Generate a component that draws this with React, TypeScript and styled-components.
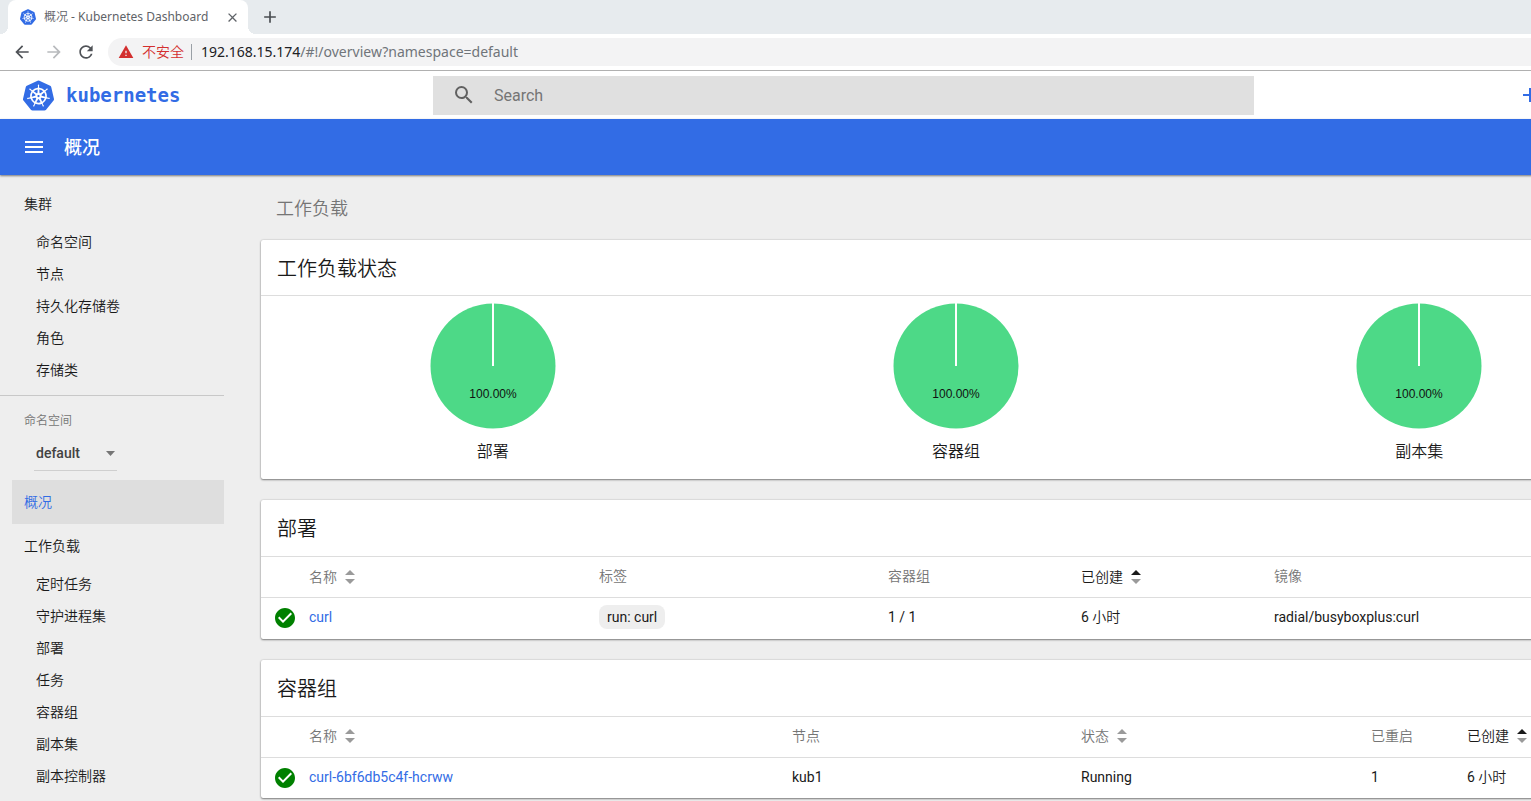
import React from "react";
import styled, { createGlobalStyle } from "styled-components";
import { MdAdd, MdArrowBack, MdArrowForward, MdCheckCircle, MdClose, MdMenu, MdRefresh, MdSearch, MdWarning } from "react-icons/md";
import { SiKubernetes } from "react-icons/si";

const blue = "#326ce5";
const ink = "#1a1a1a";
const muted = "#757575";

const GlobalStyle = createGlobalStyle`
  *, *::before, *::after { box-sizing: border-box; }
  body {
    margin: 0;
    background: #eeeeee;
    color: ${ink};
    font: 14px/20px Roboto, "Noto Sans CJK SC DemiLight", "Noto Sans CJK SC", sans-serif;
  }
  button, input, select { font: inherit; color: inherit; }
  button { padding: 0; border: 0; background: none; display: inline-flex; align-items: center; cursor: pointer; }
  a { color: inherit; text-decoration: none; }
  h1, h2, ul { margin: 0; padding: 0; font-weight: 400; }
  ul { list-style: none; }
`;

/* The dashboard is wider than the window and is cut at the right edge. */
const Viewport = styled.div`
  min-height: 100vh;
  overflow: hidden;
`;

const Dashboard = styled.div`
  width: calc(100% + 156px);
`;

const TabStrip = styled.div`
  display: flex;
  height: 34px;
  padding-left: 8px;
  background: #e7ebee;
`;

const Tab = styled.div`
  position: relative;
  display: flex;
  align-items: center;
  gap: 8px;
  width: 240px;
  padding: 0 8px 0 12px;
  border-radius: 8px 8px 0 0;
  background: #fff;
  font: 12px/16px "Noto Sans", "Noto Sans CJK SC DemiLight", "Noto Sans CJK SC", sans-serif;
  color: #5f6368;

  &::before, &::after {
    content: "";
    position: absolute;
    bottom: 0;
    width: 8px;
    height: 8px;
  }
  &::before { left: -8px; background: radial-gradient(circle at 0 0, transparent 8px, #fff 8px); }
  &::after { right: -8px; background: radial-gradient(circle at 100% 0, transparent 8px, #fff 8px); }
`;

const TabTitle = styled.span`
  flex: 1;
  white-space: nowrap;
`;

const NewTabButton = styled.button`
  margin-left: 12px;
  color: #4a4d51;
`;

const Toolbar = styled.div`
  display: flex;
  align-items: center;
  gap: 12px;
  height: 37px;
  padding-left: 12px;
  background: #fff;
  border-bottom: 1px solid #b0b0b0;
`;

const ToolButton = styled.button<{ $dim?: boolean }>`
  color: ${(p) => (p.$dim ? "#b8babd" : "#4f5257")};
`;

const AddressBar = styled.div`
  display: flex;
  align-items: center;
  flex: 1;
  height: 28px;
  padding-left: 10px;
  border-radius: 14px 0 0 14px;
  background: #f3f3f4;
  font: 14px/20px "Noto Sans", "Noto Sans CJK SC DemiLight", "Noto Sans CJK SC", sans-serif;
`;

const Insecure = styled.button`
  gap: 8px;
  color: #d32f2f;
`;

const AddressDivider = styled.span`
  width: 1px;
  height: 16px;
  margin-left: 7px;
  background: #9aa0a6;
`;

const Address = styled.div`
  padding-left: 9px;
  white-space: nowrap;
  outline: none;
  color: #202124;
`;

const AddressPath = styled.span`
  color: #70757a;
`;

const Header = styled.header`
  display: flex;
  align-items: center;
  height: 48px;
  background: #fff;
`;

const Brand = styled.a`
  display: flex;
  align-items: center;
  gap: 12px;
  flex: 0 0 433px;
  padding-left: 23px;
  color: ${blue};
  font: bold 19px/24px "DejaVu Sans Mono", monospace;
`;

const SearchBox = styled.label`
  display: flex;
  align-items: center;
  gap: 18px;
  flex: 1;
  height: 39px;
  padding-left: 19px;
  background: #e0e0e0;
  color: #616161;
`;

const SearchInput = styled.input`
  flex: 1;
  border: 0;
  padding: 2px 0 0;
  outline: none;
  background: none;
  font-size: 16px;
  &::placeholder { color: #757575; opacity: 1; }
`;

const HeaderActions = styled.div`
  display: flex;
  justify-content: flex-end;
  flex: 0 0 433px;
  padding-right: 145px;
  color: ${blue};
`;

const ActionBar = styled.div`
  position: relative;
  display: flex;
  align-items: center;
  gap: 18px;
  height: 56px;
  padding-left: 22px;
  background: ${blue};
  color: #fff;
  box-shadow: 0 1px 2px rgba(0, 0, 0, 0.5);
`;

const PageTitle = styled.h1`
  padding-top: 2px;
  font: 500 18px/24px Roboto, "Noto Sans CJK SC", sans-serif;
`;

const Body = styled.div`
  display: flex;
`;

const Sidebar = styled.nav`
  flex: 0 0 224px;
  padding-top: 7px;
`;

const Category = styled.a<{ $active?: boolean }>`
  display: flex;
  align-items: center;
  height: 44px;
  margin-left: 12px;
  padding-left: 12px;
  ${(p) => p.$active && `background: #dedede; color: ${blue};`}
`;

const SubItem = styled.a`
  display: flex;
  align-items: center;
  height: 32px;
  padding-left: 36px;
`;

const NamespaceBlock = styled.div`
  margin-top: 9px;
  padding: 15px 0 9px 24px;
  border-top: 1px solid #c8c8c8;
`;

const NamespaceLabel = styled.label`
  display: block;
  font-size: 12px;
  color: ${muted};
`;

const SelectWrap = styled.div`
  display: flex;
  align-items: center;
  width: 83px;
  height: 35px;
  margin: 5px 0 0 10px;
  border-bottom: 1px solid #cfcfcf;
`;

const Select = styled.select`
  appearance: none;
  flex: 1;
  padding: 0 0 0 2px;
  border: 0;
  outline: none;
  background: none;
  font-weight: 500;
  color: #424242;
`;

const SelectArrow = styled.svg`
  flex: none;
  margin-right: 2px;
  fill: #757575;
`;

const Content = styled.main`
  flex: 1;
  padding: 22px 36px 2px 37px;
`;

const GroupTitle = styled.h1`
  padding: 0 15px;
  font-size: 18px;
  line-height: 24px;
  color: ${muted};
`;

const Card = styled.section`
  margin-bottom: 21px;
  background: #fff;
  border-radius: 2px;
  box-shadow: 0 1px 2px rgba(0, 0, 0, 0.45), 0 0 2px rgba(0, 0, 0, 0.2);

  h1 + & { margin-top: 19px; }
  &:last-child { margin-bottom: 0; }
`;

const CardTitle = styled.h2`
  padding: 17px 16px 15px;
  font-size: 20px;
  line-height: 24px;
`;

const ChartsTitle = styled(CardTitle)`
  padding-bottom: 14px;
`;

const Charts = styled.div`
  display: grid;
  grid-template-columns: repeat(3, 1fr);
  padding: 7px 0 15px;
  border-top: 1px solid #dddddd;
`;

const ChartCell = styled.figure`
  display: flex;
  flex-direction: column;
  align-items: center;
  gap: 11px;
  margin: 0;
  font-size: 16px;
  line-height: 24px;
`;

const Table = styled.table`
  width: 100%;
  table-layout: fixed;
  border-collapse: collapse;
`;

const Col = styled.col<{ $w?: number }>`
  ${(p) => p.$w && `width: ${p.$w}px;`}
`;

const Th = styled.th<{ $sorted?: boolean }>`
  height: 41px;
  padding: 0 0 2px;
  border-top: 1px solid #dddddd;
  text-align: left;
  font-weight: 400;
  color: ${(p) => (p.$sorted ? ink : muted)};
`;

const SortButton = styled.button`
  gap: 8px;
  vertical-align: middle;
`;

const Td = styled.td`
  height: 41px;
  padding: 0 0 2px;
  border-top: 1px solid #dddddd;
  white-space: nowrap;
`;

const StatusTd = styled(Td)`
  padding: 0 0 0 12px;
  color: #008000;
  svg { display: block; }
`;

const TableLink = styled.a`
  color: ${blue};
`;

const Chip = styled.span`
  display: inline-block;
  padding: 2px 8px;
  border-radius: 8px;
  background: #eeeeee;
`;

function SortArrows({ active }: { active?: boolean }) {
  return (
    <svg width="10" height="14" viewBox="0 0 10 14" aria-hidden="true">
      <path d="M0 5 5 0 10 5Z" fill={active ? ink : "#9a9a9a"} />
      <path d="M0 9 5 14 10 9Z" fill="#9a9a9a" />
    </svg>
  );
}

const PieValue = styled.text`
  font: 12px "Liberation Sans", sans-serif;
  text-anchor: middle;
  fill: #111;
`;

function Pie({ label }: { label: string }) {
  return (
    <ChartCell>
      <svg width="126" height="126" viewBox="0 0 126 126" role="img" aria-label={`${label} 100.00%`}>
        <circle cx="63" cy="63" r="62.5" fill="#4dd987" />
        <path d="M63 0V63" stroke="#fff" strokeWidth="2" />
        <PieValue x="63" y="95">100.00%</PieValue>
      </svg>
      <figcaption>{label}</figcaption>
    </ChartCell>
  );
}

type Column = { label: string; width?: number; sort?: boolean; sorted?: boolean };

function ResourceCard({ title, columns, cells }: { title: string; columns: Column[]; cells: React.ReactNode[] }) {
  return (
    <Card>
      <CardTitle>{title}</CardTitle>
      <Table>
        <colgroup>
          <Col $w={48} />
          {columns.map((c) => <Col key={c.label} $w={c.width} />)}
        </colgroup>
        <thead>
          <tr>
            <Th aria-label="状态图标" />
            {columns.map((c) => (
              <Th key={c.label} $sorted={c.sorted}>
                {c.sort ? <SortButton type="button">{c.label}<SortArrows active={c.sorted} /></SortButton> : c.label}
              </Th>
            ))}
          </tr>
        </thead>
        <tbody>
          <tr>
            <StatusTd><MdCheckCircle size={24} /></StatusTd>
            {cells.map((cell, i) => <Td key={columns[i].label}>{cell}</Td>)}
          </tr>
        </tbody>
      </Table>
    </Card>
  );
}

const clusterItems = ["命名空间", "节点", "持久化存储卷", "角色", "存储类"];
const workloadItems = ["定时任务", "守护进程集", "部署", "任务", "容器组", "副本集", "副本控制器"];

const deploymentColumns: Column[] = [
  { label: "名称", width: 290, sort: true },
  { label: "标签", width: 289 },
  { label: "容器组", width: 193 },
  { label: "已创建", width: 193, sort: true, sorted: true },
  { label: "镜像" },
];

const podColumns: Column[] = [
  { label: "名称", width: 483, sort: true },
  { label: "节点", width: 289 },
  { label: "状态", width: 290, sort: true },
  { label: "已重启", width: 96 },
  { label: "已创建", sort: true, sorted: true },
];

export default function App() {
  return (
    <Viewport>
      <GlobalStyle />
      <TabStrip>
        <Tab>
          <SiKubernetes size={16} color={blue} />
          <TabTitle>概况 - Kubernetes Dashboard</TabTitle>
          <button type="button" aria-label="Close tab"><MdClose size={15} /></button>
        </Tab>
        <NewTabButton type="button" aria-label="New tab"><MdAdd size={20} /></NewTabButton>
      </TabStrip>
      <Toolbar>
        <ToolButton type="button" aria-label="Back"><MdArrowBack size={20} /></ToolButton>
        <ToolButton type="button" aria-label="Forward" $dim><MdArrowForward size={20} /></ToolButton>
        <ToolButton type="button" aria-label="Reload"><MdRefresh size={20} /></ToolButton>
        <AddressBar>
          <Insecure type="button"><MdWarning size={16} />不安全</Insecure>
          <AddressDivider />
          <Address role="textbox" aria-label="Address" contentEditable suppressContentEditableWarning spellCheck={false}>
            192.168.15.174<AddressPath>/#!/overview?namespace=default</AddressPath>
          </Address>
        </AddressBar>
      </Toolbar>

      <Dashboard>
        <Header>
          <Brand href="#overview"><SiKubernetes size={31} />kubernetes</Brand>
          <SearchBox>
            <MdSearch size={24} />
            <SearchInput type="text" placeholder="Search" aria-label="Search" />
          </SearchBox>
          <HeaderActions>
            <button type="button" aria-label="Create"><MdAdd size={24} /></button>
          </HeaderActions>
        </Header>
        <ActionBar>
          <button type="button" aria-label="Menu"><MdMenu size={24} /></button>
          <PageTitle>概况</PageTitle>
        </ActionBar>

        <Body>
          <Sidebar>
            <Category href="#cluster">集群</Category>
            <ul>
              {clusterItems.map((item) => <li key={item}><SubItem href="#cluster">{item}</SubItem></li>)}
            </ul>
            <NamespaceBlock>
              <NamespaceLabel htmlFor="namespace">命名空间</NamespaceLabel>
              <SelectWrap>
                <Select id="namespace" defaultValue="default">
                  <option value="default">default</option>
                </Select>
                <SelectArrow width="9" height="5" viewBox="0 0 9 5"><path d="M0 0H9L4.500 5Z" /></SelectArrow>
              </SelectWrap>
            </NamespaceBlock>
            <Category href="#overview" $active>概况</Category>
            <Category href="#workloads">工作负载</Category>
            <ul>
              {workloadItems.map((item) => <li key={item}><SubItem href="#workloads">{item}</SubItem></li>)}
            </ul>
          </Sidebar>

          <Content>
            <GroupTitle>工作负载</GroupTitle>
            <Card>
              <ChartsTitle>工作负载状态</ChartsTitle>
              <Charts>
                <Pie label="部署" />
                <Pie label="容器组" />
                <Pie label="副本集" />
              </Charts>
            </Card>
            <ResourceCard
              title="部署"
              columns={deploymentColumns}
              cells={[
                <TableLink href="#curl">curl</TableLink>,
                <Chip>run: curl</Chip>,
                "1 / 1",
                "6 小时",
                "radial/busyboxplus:curl",
              ]}
            />
            <ResourceCard
              title="容器组"
              columns={podColumns}
              cells={[
                <TableLink href="#pod">curl-6bf6db5c4f-hcrww</TableLink>,
                "kub1",
                "Running",
                "1",
                "6 小时",
              ]}
            />
          </Content>
        </Body>
      </Dashboard>
    </Viewport>
  );
}
